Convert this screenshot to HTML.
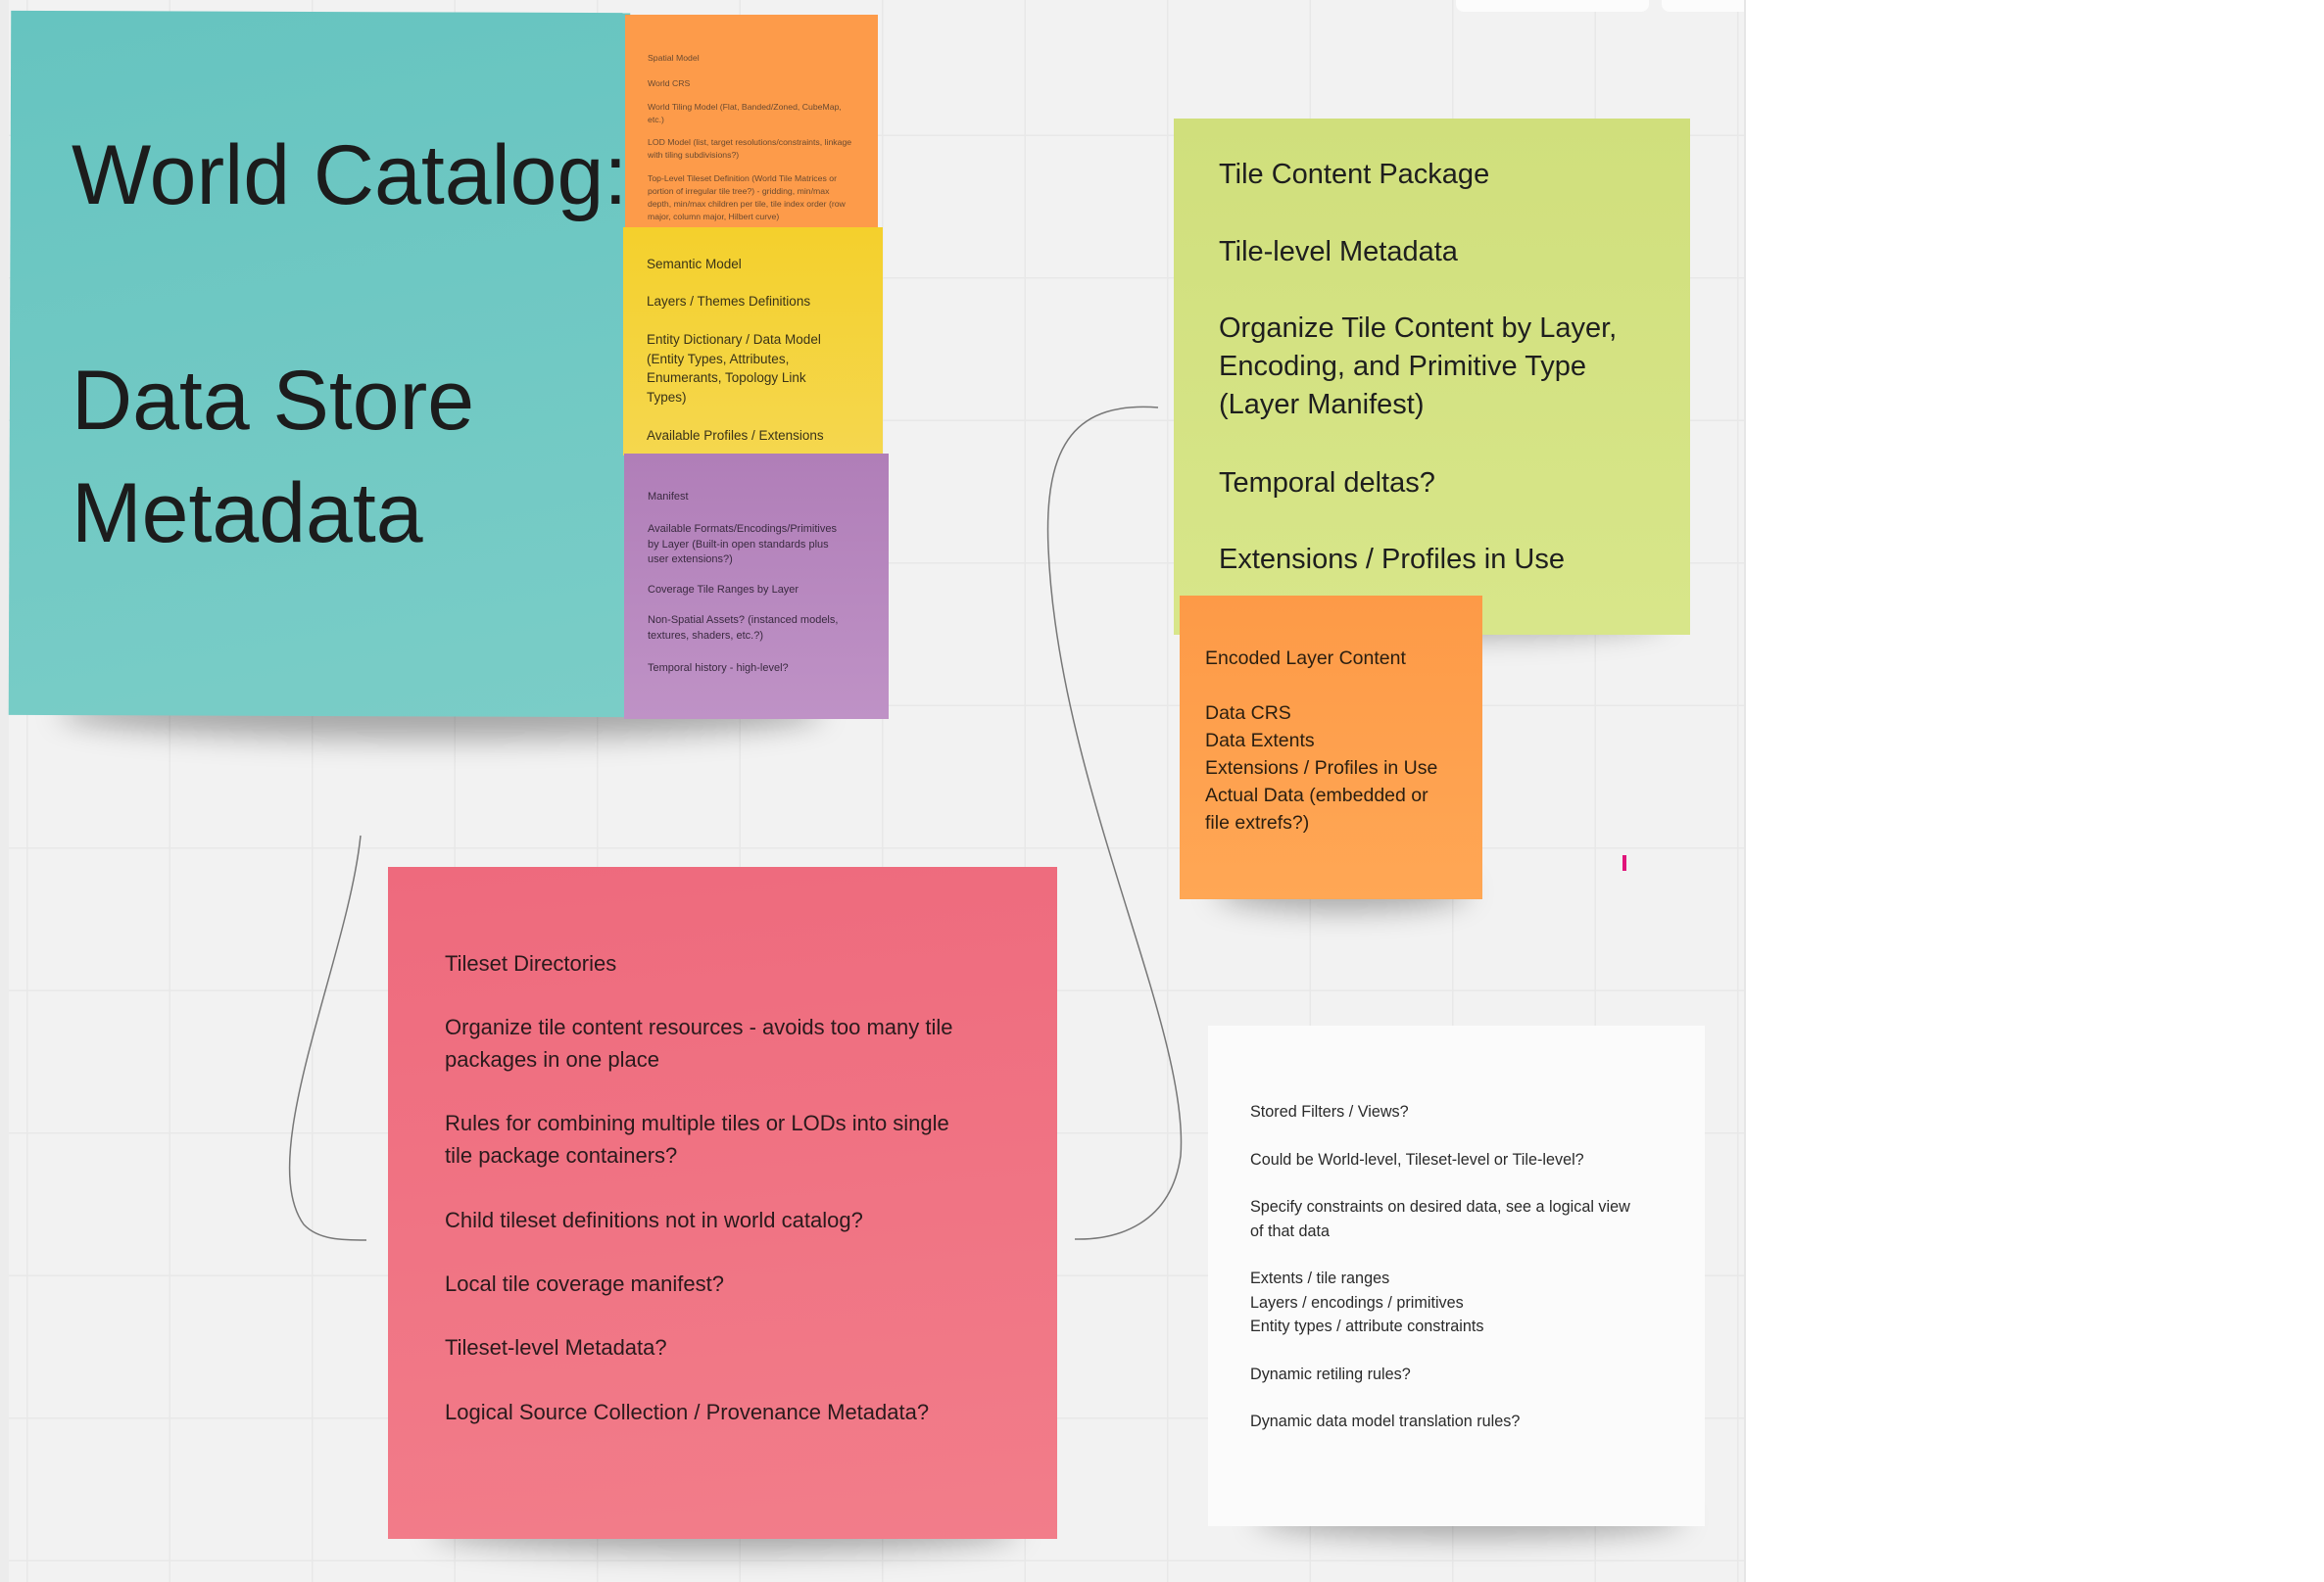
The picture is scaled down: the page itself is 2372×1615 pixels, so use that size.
<!DOCTYPE html>
<html><head><meta charset="utf-8"><style>
body{margin:0;width:2372px;height:1615px;overflow:hidden;background:#fff;font-family:"Liberation Sans","DejaVu Sans",sans-serif;}
#c{position:absolute;left:0;top:0;width:1780px;height:1615px;background-color:#f2f2f2;
background-image:linear-gradient(to right,#e8e8e8 1.5px,transparent 1.5px),linear-gradient(to bottom,#e8e8e8 1.5px,transparent 1.5px);
background-size:145.5px 145.5px;background-position:27px -8px;border-right:2px solid #e6e6e6;}
.n{position:absolute;box-sizing:border-box;color:#222;}
.sh{position:absolute;background:rgba(0,0,0,.3);filter:blur(14px);border-radius:50%;}
.n p{margin:0;position:absolute;white-space:nowrap;}
</style></head><body><div id="c">
<div style="position:absolute;left:1486px;top:0;width:197px;height:12px;background:#fcfcfc;border-radius:0 0 8px 8px"></div>
<div style="position:absolute;left:1696px;top:0;width:84px;height:12px;background:#fcfcfc;border-radius:0 0 0 8px"></div>
<div style="position:absolute;left:0;top:0;width:9px;height:1615px;background:#ececec"></div>

<div class="sh" style="left:60px;top:700px;width:780px;height:55px"></div>
<div class="sh" style="left:1280px;top:610px;width:420px;height:40px"></div>
<div class="sh" style="left:1240px;top:890px;width:260px;height:40px"></div>
<div class="sh" style="left:440px;top:1540px;width:600px;height:45px"></div>
<div class="sh" style="left:1280px;top:1530px;width:440px;height:40px"></div>

<div class="n" style="left:10px;top:12px;width:632px;height:719px;background:linear-gradient(170deg,#66c4c0,#7acdc7);transform:rotate(0.2deg)"></div>
<div style="position:absolute;left:73px;top:136px;font-size:86px;line-height:1;color:#1c1c1c;white-space:nowrap">World Catalog:</div>
<div style="position:absolute;left:73px;top:366px;font-size:86px;line-height:1;color:#1c1c1c">Data Store</div>
<div style="position:absolute;left:73px;top:481px;font-size:86px;line-height:1;color:#1c1c1c">Metadata</div>

<div class="n" style="left:638px;top:15px;width:258px;height:220px;background:#fd9b4a;font-size:8.7px;color:#6a4a30;line-height:13px">
<p style="left:23px;top:38px">Spatial Model</p>
<p style="left:23px;top:64px">World CRS</p>
<p style="left:23px;top:88px">World Tiling Model (Flat, Banded/Zoned, CubeMap,<br>etc.)</p>
<p style="left:23px;top:124px">LOD Model (list, target resolutions/constraints, linkage<br>with tiling subdivisions?)</p>
<p style="left:23px;top:161px">Top-Level Tileset Definition (World Tile Matrices or<br>portion of irregular tile tree?) - gridding, min/max<br>depth, min/max children per tile, tile index order (row<br>major, column major, Hilbert curve)</p>
</div>
<div class="n" style="left:636px;top:232px;width:265px;height:233px;background:linear-gradient(#f4d02c,#f5d74e);font-size:13.5px;color:#3a3318;line-height:19.5px">
<p style="left:24px;top:28px">Semantic Model</p>
<p style="left:24px;top:66px">Layers / Themes Definitions</p>
<p style="left:24px;top:105px">Entity Dictionary / Data Model<br>(Entity Types, Attributes,<br>Enumerants, Topology Link<br>Types)</p>
<p style="left:24px;top:203px">Available Profiles / Extensions</p>
</div>
<div class="n" style="left:637px;top:463px;width:270px;height:271px;background:linear-gradient(#b07eb8,#bf92c6);font-size:11px;color:#3a2a40;line-height:15.5px">
<p style="left:24px;top:37px">Manifest</p>
<p style="left:24px;top:70px">Available Formats/Encodings/Primitives<br>by Layer (Built-in open standards plus<br>user extensions?)</p>
<p style="left:24px;top:132px">Coverage Tile Ranges by Layer</p>
<p style="left:24px;top:163px">Non-Spatial Assets? (instanced models,<br>textures, shaders, etc.?)</p>
<p style="left:24px;top:212px">Temporal history - high-level?</p>
</div>

<div class="n" style="left:1198px;top:121px;width:527px;height:527px;background:linear-gradient(#d0df7c,#d8e68a);font-size:29px;line-height:39px;color:#1e1e1e">
<p style="left:46px;top:38px">Tile Content Package</p>
<p style="left:46px;top:117px">Tile-level Metadata</p>
<p style="left:46px;top:195px">Organize Tile Content by Layer,<br>Encoding, and Primitive Type<br>(Layer Manifest)</p>
<p style="left:46px;top:353px">Temporal deltas?</p>
<p style="left:46px;top:431px">Extensions / Profiles in Use</p>
</div>
<div class="n" style="left:1204px;top:608px;width:309px;height:310px;background:linear-gradient(#fd9a47,#ffa755);font-size:19.5px;line-height:28px;color:#2a1e10">
<p style="left:26px;top:50px">Encoded Layer Content</p>
<p style="left:26px;top:106px">Data CRS<br>Data Extents<br>Extensions / Profiles in Use<br>Actual Data (embedded or<br>file extrefs?)</p>
</div>
<div style="position:absolute;left:1656px;top:873px;width:4px;height:16px;background:#e0157a"></div>

<div class="n" style="left:396px;top:885px;width:683px;height:686px;background:linear-gradient(175deg,#ee6a7d,#f27d8a);font-size:22px;line-height:33px;color:#2a1a1c">
<p style="left:58px;top:82px">Tileset Directories</p>
<p style="left:58px;top:147px">Organize tile content resources - avoids too many tile<br>packages in one place</p>
<p style="left:58px;top:245px">Rules for combining multiple tiles or LODs into single<br>tile package containers?</p>
<p style="left:58px;top:344px">Child tileset definitions not in world catalog?</p>
<p style="left:58px;top:409px">Local tile coverage manifest?</p>
<p style="left:58px;top:474px">Tileset-level Metadata?</p>
<p style="left:58px;top:540px">Logical Source Collection / Provenance Metadata?</p>
</div>

<div class="n" style="left:1233px;top:1047px;width:507px;height:511px;background:#fbfbfb;font-size:16.2px;line-height:24.5px;color:#2a2a2a">
<p style="left:43px;top:76px">Stored Filters / Views?</p>
<p style="left:43px;top:125px">Could be World-level, Tileset-level or Tile-level?</p>
<p style="left:43px;top:173px">Specify constraints on desired data, see a logical view<br>of that data</p>
<p style="left:43px;top:246px">Extents / tile ranges<br>Layers / encodings / primitives<br>Entity types / attribute constraints</p>
<p style="left:43px;top:344px">Dynamic retiling rules?</p>
<p style="left:43px;top:392px">Dynamic data model translation rules?</p>
</div>

<svg style="position:absolute;left:0;top:0" width="1780" height="1615" fill="none" stroke="#777" stroke-width="1.5">
<path d="M368 853 C 355 980, 260 1180, 310 1250 C 325 1266, 350 1266, 374 1266"/>
<path d="M1182 416 C 1100 410, 1065 450, 1070 560 C 1080 800, 1215 1050, 1205 1180 C 1195 1250, 1140 1266, 1097 1265"/>
</svg>
</div></body></html>
